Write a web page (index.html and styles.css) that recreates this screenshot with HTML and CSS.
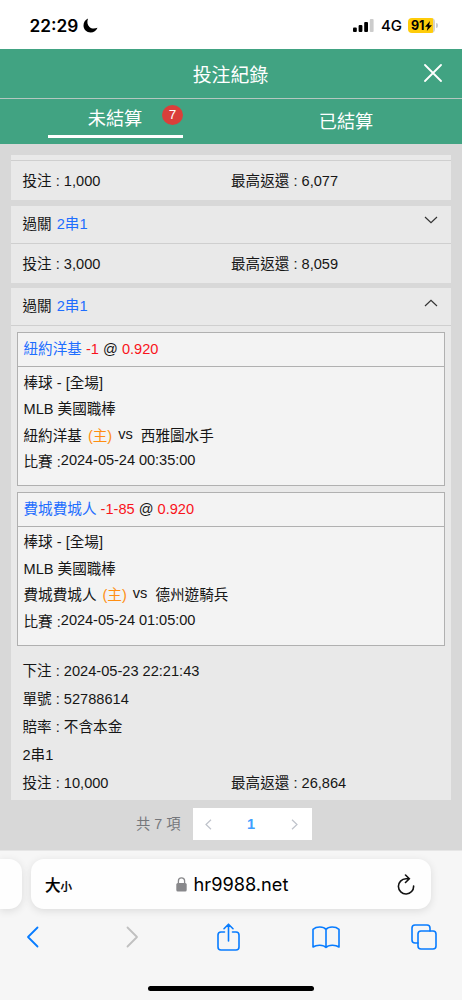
FILE: index.html
```html
<!DOCTYPE html>
<html lang="zh-Hant">
<head>
  <meta charset="UTF-8">
  <meta name="viewport" content="width=device-width, initial-scale=1.0">
  <title>投注紀錄</title>
  <link rel="stylesheet" href="styles.css">
</head>
<body>
  <div class="status-bar">
    <div class="clock">
      <span>22:29</span>
      <svg width="15" height="15" viewBox="0 0 15 15"><path d="M5 .5C3.8 4 4.300 7 6.500 9c2 1.800 4.800 2 8 .800C13.300 12.800 10.700 14.500 7.700 14.500 3.600 14.500.5 11.500.5 7.500.5 4.300 2.200 1.700 5 .5z"/></svg>
    </div>
    <div class="signal">
      <svg width="21" height="15" viewBox="0 0 21 15"><rect x="0" y="9.500" width="3.800" height="4.500" rx="1"/><rect x="5.600" y="7" width="3.800" height="7" rx="1"/><rect x="11.200" y="4" width="3.800" height="10" rx="1"/><rect x="16.800" y="1" width="3.800" height="13" rx="1" fill="#ccc"/></svg>
      <span class="network">4G</span>
      <div class="battery">
        <span>91</span>
        <svg width="7" height="10" viewBox="0 0 7 10"><path d="M5 0L0 5.800h2.800L1.800 10 7 4.200H4.100z"/></svg>
      </div>
      <i class="battery-tip"></i>
    </div>
  </div>

  <header class="title-bar">
    <h1>投注紀錄</h1>
    <svg class="close" width="18" height="18" viewBox="0 0 18 18"><path d="M1 1l16 16M17 1L1 17"/></svg>
  </header>

  <nav class="tabs">
    <div class="tab active">未結算<span class="badge">7</span></div>
    <div class="tab">已結算</div>
  </nav>

  <main class="records">
    <div class="card cut">
      <div class="card-foot"><span>投注 : 1,000</span><span>最高返還 : 6,077</span></div>
    </div>

    <div class="card">
      <div class="card-head">
        <span>過關 <b>2串1</b></span>
        <svg class="arrow" width="14" height="8" viewBox="0 0 14 8"><path d="M1 1l6 5.700L13 1"/></svg>
      </div>
      <div class="card-foot"><span>投注 : 3,000</span><span>最高返還 : 8,059</span></div>
    </div>

    <div class="card">
      <div class="card-head">
        <span>過關 <b>2串1</b></span>
        <svg class="arrow" width="14" height="8" viewBox="0 0 14 8"><path d="M1 7l6-5.700L13 7"/></svg>
      </div>
      <div class="bets">
        <div class="bet">
          <div class="bet-head"><span class="team">紐約洋基</span> <span class="odds">-1</span> @ <span class="odds">0.920</span></div>
          <div class="bet-body">
            <p>棒球 - [全場]</p>
            <p>MLB 美國職棒</p>
            <p class="match"><span>紐約洋基</span><span class="home">(主)</span><span class="vs">vs</span><span>西雅圖水手</span></p>
            <p>比賽 :<span class="time">2024-05-24 00:35:00</span></p>
          </div>
        </div>
        <div class="bet">
          <div class="bet-head"><span class="team">費城費城人</span> <span class="odds">-1-85</span> @ <span class="odds">0.920</span></div>
          <div class="bet-body">
            <p>棒球 - [全場]</p>
            <p>MLB 美國職棒</p>
            <p class="match"><span>費城費城人</span><span class="home">(主)</span><span class="vs">vs</span><span>德州遊騎兵</span></p>
            <p>比賽 :<span class="time">2024-05-24 01:05:00</span></p>
          </div>
        </div>
      </div>
      <div class="detail">
        <p>下注 : 2024-05-23 22:21:43</p>
        <p>單號 : 52788614</p>
        <p>賠率 : 不含本金</p>
        <p>2串1</p>
        <p class="split"><span>投注 : 10,000</span><span>最高返還 : 26,864</span></p>
      </div>
    </div>

    <div class="pagination">
      <span class="total">共 7 項</span>
      <div class="pager">
        <svg width="7" height="11" viewBox="0 0 7 11"><path d="M6 .7L1 5.500l5 4.800"/></svg>
        <span>1</span>
        <svg width="7" height="11" viewBox="0 0 7 11"><path d="M1 .7l5 4.800-5 4.800"/></svg>
      </div>
    </div>
  </main>

  <footer class="browser">
    <div class="address-row">
      <div class="prev-tab"></div>
      <div class="address">
        <span class="text-size">大<small>小</small></span>
        <span class="url">
          <svg width="11" height="15" viewBox="0 0 11 15"><rect x=".3" y="6" width="10.400" height="8.600" rx="1.500" fill="#88888b"/><path d="M2.400 6.500V4a3.100 3.100 0 0 1 6.200 0v2.500" fill="none" stroke="#88888b" stroke-width="1.300"/></svg>
          hr9988.net
        </span>
        <svg class="reload" width="18" height="21" viewBox="0 0 18 21"><path d="M11.800 4.800H9A7.600 7.600 0 1 0 16.600 12M8.500 1l3.800 3.800-3.800 3.700"/></svg>
      </div>
    </div>
    <div class="toolbar">
      <svg width="13" height="22" viewBox="0 0 13 22"><path d="M11.500 1.500L2 11l9.500 9.500"/></svg>
      <svg class="off" width="13" height="22" viewBox="0 0 13 22"><path d="M1.500 1.500L11 11l-9.500 9.500"/></svg>
      <svg class="thin" width="23" height="28" viewBox="0 0 23 28"><path d="M7.500 9H4a3 3 0 0 0-3 3v12a3 3 0 0 0 3 3h15a3 3 0 0 0 3-3V12a3 3 0 0 0-3-3h-3.500M11.500 18V1.500M7 5.700l4.500-4.500L16 5.700"/></svg>
      <svg class="thin" width="28" height="23" viewBox="0 0 28 23"><path d="M14 3.500C11.500.3 4.500.3 1 3.300V21c3.500-2.500 10.500-2.500 13 .5 2.500-3 9.500-3 13-.5V3.300C23.500.3 16.500.3 14 3.500zV21.500"/></svg>
      <svg class="thin" width="26" height="26" viewBox="0 0 26 26"><rect x="7" y="7" width="18" height="18" rx="3"/><path d="M7 19H4a3 3 0 0 1-3-3V4a3 3 0 0 1 3-3h12a3 3 0 0 1 3 3v3"/></svg>
    </div>
    <div class="home-bar"></div>
  </footer>
</body>
</html>
```

FILE: styles.css
```css
* { margin: 0; padding: 0; box-sizing: border-box; }
body { width: 462px; height: 1000px; overflow: hidden; display: flex; flex-direction: column; background: #d8d8d8; color: #161616; font-family: "Liberation Sans", "Noto Sans CJK TC", sans-serif; font-size: 14.6px; }
svg { display: block; flex: none; }

.status-bar { height: 49px; background: #fff; color: #000; display: flex; justify-content: space-between; padding: 2px 24px 0 29.5px; font-family: Inter, sans-serif; }
.clock, .signal { display: flex; align-items: center; }
.clock { font-size: 17.3px; font-weight: 600; gap: 5px; }
.network { margin: 0 6px 0 8px; font-size: 15px; font-weight: 500; }
.signal svg:first-child { margin-right: -1px; }
.battery { width: 27px; height: 15px; border-radius: 4px; background: linear-gradient(90deg, #ffcc0a 92%, #d6d2c4 92%); display: flex; align-items: center; padding-left: 3px; font-size: 12.5px; font-weight: 700; }
.battery-tip { width: 2px; height: 5px; margin-left: 1px; border-radius: 0 2px 2px 0; background: #ccc; }

.title-bar { height: 50px; background: #41a382; border-bottom: 1px solid #b4c7c0; color: #fff; display: flex; align-items: center; padding: 0 20px 0 37px; }
.title-bar h1 { flex: 1; margin-top: -1px; text-align: center; font-size: 18.9px; font-weight: 400; }
.close { margin-top: -2px; fill: none; stroke: #fff; stroke-width: 1.8; stroke-linecap: round; }

.tabs { height: 45px; background: #41a382; color: #fff; display: grid; grid-template-columns: 1fr 1fr; font-size: 18.2px; }
.tab { line-height: 47px; text-align: center; padding-right: 1px; }
.tab.active { position: relative; width: 135px; height: 39px; line-height: 41px; margin-left: 48px; border-bottom: 3px solid #fff; }
.badge { position: absolute; top: 6px; right: 0; width: 21px; height: 20px; border-radius: 50%; background: #da3f3a; font-size: 13.5px; line-height: 20px; }

.records { flex: 1; padding: 11px 11px 0; }
.card { background: #e9e9e9; margin-bottom: 5.5px; }
.card.cut { padding-top: 5px; }
.card-head { height: 37px; display: flex; justify-content: space-between; padding: 0 13px 0 11.5px; line-height: 37px; }
.card-head b { margin-left: 1px; color: #1e6eff; font-weight: 400; }
.arrow { margin-top: 10.5px; fill: none; stroke: #333; stroke-width: 1.2; }
.card-foot { height: 40px; border-top: 1px solid #cfcfcf; line-height: 40px; }
.card-foot, .split { display: grid; grid-template-columns: 208.5px 1fr; }
.card-foot { padding-left: 11.5px; }

.bets { border-top: 1px solid #cfcfcf; padding: 6px 6px 0; }
.bet { height: 154px; margin-bottom: 5.5px; border: 1px solid #b0b0b0; background: #f3f3f3; }
.bet-head { height: 34px; padding-left: 5.5px; border-bottom: 1px solid #b0b0b0; line-height: 33px; }
.team { color: #1e6eff; }
.odds { color: #f9141b; }
.bet-body { padding: 2.5px 5.5px 0; }
.bet-body p { height: 26.5px; line-height: 26.5px; }
.match { display: flex; }
.home { margin: 0 6px; color: #ff8e12; }
.vs { margin: -2px 8px 0 0; }
.time { display: inline-block; vertical-align: 2px; line-height: 20px; letter-spacing: -0.05px; }
.detail { padding: 6px 11.5px 3px; }
.detail p { height: 28px; line-height: 28px; }

.pagination { display: flex; align-items: center; margin-top: 8px; padding-left: 125px; }
.total { width: 56.5px; margin-top: -4px; color: #75777b; font-size: 14.3px; }
.pager { width: 119px; height: 32px; display: flex; align-items: center; justify-content: space-between; padding: 0 14px 0 12px; background: #fff; color: #409eff; font-weight: 700; }
.pager span { margin-top: -1px; }
.pager svg { fill: none; stroke: #bfc3cb; stroke-width: 1.2; }

.browser { height: 150px; background: #f6f6f6; border-top: 1px solid #e6e6e6; color: #000; font-family: Inter, "Noto Sans CJK TC", sans-serif; }
.address-row { display: flex; gap: 9px; padding-top: 8px; }
.prev-tab, .address { height: 50px; background: #fefefe; box-shadow: 0 2px 9px rgba(0,0,0,0.11); }
.prev-tab { width: 22px; border-radius: 0 13px 13px 0; }
.address { width: 400px; border-radius: 13px; display: flex; align-items: center; justify-content: space-between; padding: 0 16px 0 14px; }
.text-size { width: 40px; font-size: 15.5px; font-weight: 500; -webkit-text-stroke: 0.2px #000; }
.text-size small { font-size: 11.5px; }
.url { display: flex; align-items: center; gap: 7px; font-size: 18.2px; margin-right: 18px; }
.reload { fill: none; stroke: #111; stroke-width: 1.6; stroke-linecap: round; }
.toolbar { height: 56px; display: grid; grid-template-columns: repeat(5, 98px); align-items: center; justify-items: center; margin-left: -17px; }
.toolbar svg { fill: none; stroke: #087cff; stroke-width: 1.8; stroke-linecap: round; stroke-linejoin: round; }
.toolbar .thin { stroke-width: 1.6; }
.toolbar .off { stroke: #c0c0c0; margin-left: 4px; }
.home-bar { width: 166px; height: 5px; margin: 21px auto 0; border-radius: 3px; background: #000; }
```
